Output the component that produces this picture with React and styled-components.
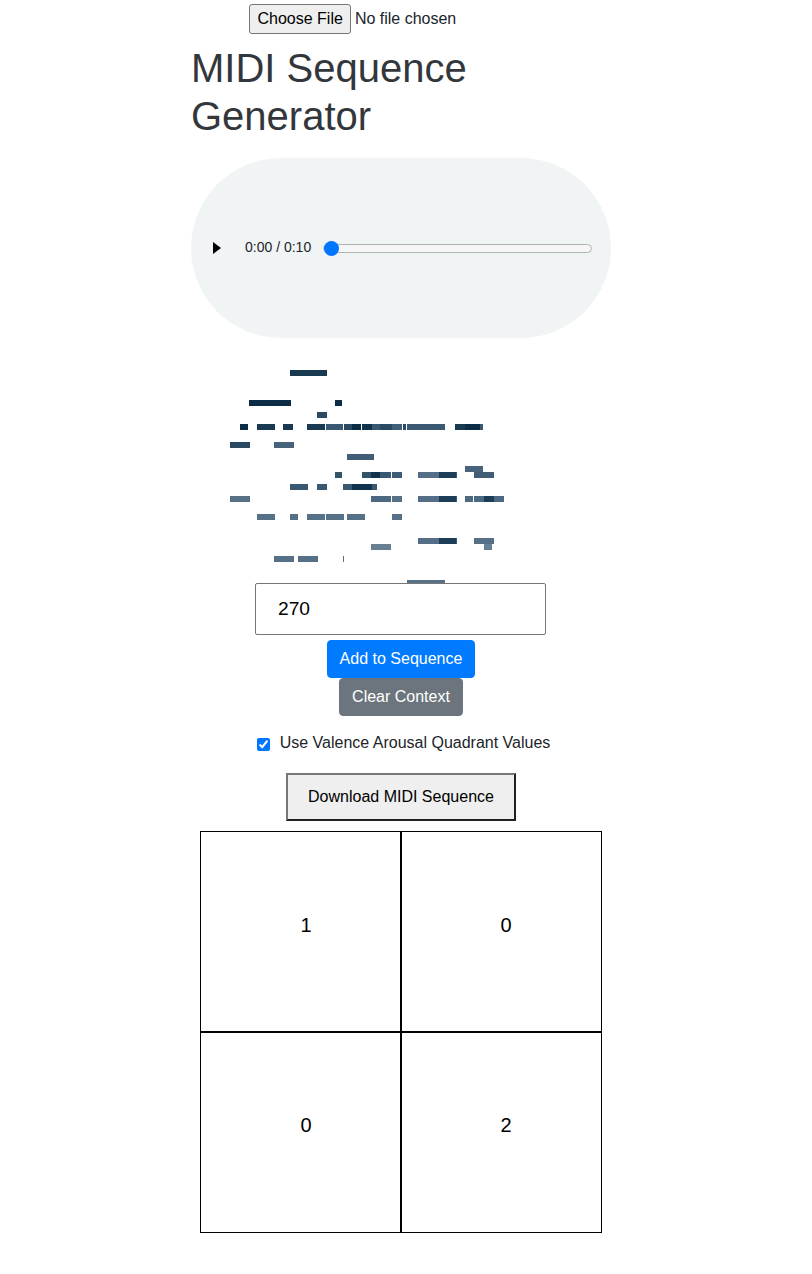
import React from 'react'
import styled, { createGlobalStyle } from 'styled-components'

const A = '#0c2c46'
const B = '#193951'
const C = '#2a4a63'
const D = '#395871'
const E = '#48647c'
const F = '#557087'
const G = '#688093'
const H = '#11344e'

// x1, x2, y, colour; every note is 6px high
const notes = [
    [290, 327, 370, B],
    [249, 291, 400, A], [335, 342, 400, A],
    [317, 327, 412, C],
    [240, 248, 424, A], [257, 275, 424, B], [283, 293, 424, B], [307, 325, 424, B],
    [326, 343, 424, D], [344, 352, 424, C], [352, 361, 424, A], [362, 372, 424, H],
    [372, 380, 424, D], [380, 392, 424, C], [392, 402, 424, '#415f78'], [403, 406, 424, C],
    [407, 445, 424, '#3b5972'], [455, 465, 424, B], [465, 480, 424, A], [480, 483, 424, '#3b5972'],
    [230, 250, 442, C], [274, 294, 442, E],
    [347, 374, 454, '#425d76'],
    [465, 483, 466, E],
    [335, 342, 472, '#335369'], [362, 371, 472, '#335369'], [371, 380, 472, H], [380, 391, 472, D],
    [392, 402, 472, '#3d5b74'], [418, 439, 472, '#536e86'], [439, 456, 472, '#1c3d58'],
    [456, 457, 472, D], [474, 494, 472, '#425d76'],
    [290, 308, 484, D], [317, 327, 484, D], [343, 352, 484, D], [352, 372, 484, H], [372, 377, 484, D],
    [230, 250, 496, F], [371, 391, 496, '#4d6981'], [392, 402, 496, F], [418, 439, 496, '#536e86'],
    [439, 456, 496, '#1c3d58'], [456, 457, 496, D], [465, 473, 496, '#4d6981'], [474, 484, 496, '#4d6981'],
    [484, 494, 496, '#1c3d58'], [494, 504, 496, '#4d6981'],
    [257, 275, 514, F], [290, 298, 514, F], [307, 325, 514, F], [326, 344, 514, F],
    [347, 365, 514, F], [392, 402, 514, F],
    [418, 439, 538, '#536e86'], [439, 456, 538, '#1c3d58'], [456, 457, 538, D], [474, 494, 538, F],
    [371, 391, 544, G], [484, 492, 544, G],
    [274, 294, 556, F], [298, 318, 556, F], [343, 344, 556, F],
    [407, 445, 580, F],
]

const quadrants = [1, 0, 0, 2]

export default function App() {
    return (
        <Page>
            <GlobalStyle />
            <FileInput type="file" />
            <Column>
                <Title>MIDI Sequence Generator</Title>
                <Player>
                    <PlayIcon viewBox="0 0 8 12"><path d="M0 0 L8 6 L0 12 Z" /></PlayIcon>
                    <Time>0:00 / 0:10</Time>
                    <Seek type="range" min="0" max="10" defaultValue="0" />
                </Player>
                <PianoRoll viewBox="191 338 420 245">
                    {notes.map(([x1, x2, y, fill]) => (
                        <rect key={`${x1}-${y}`} x={x1} y={y} width={x2 - x1} height="6" fill={fill} />
                    ))}
                </PianoRoll>
            </Column>
            <LengthInput type="number" defaultValue="270" />
            <ButtonStack>
                <ActionButton $bg="#007bff">Add to Sequence</ActionButton>
                <ActionButton $bg="#6c757d">Clear Context</ActionButton>
            </ButtonStack>
            <CheckRow>
                <input type="checkbox" defaultChecked />
                <span>Use Valence Arousal Quadrant Values</span>
            </CheckRow>
            <DownloadButton>Download MIDI Sequence</DownloadButton>
            <QuadrantGrid>
                {quadrants.map((count, i) => (
                    <Quadrant key={i}>{count}</Quadrant>
                ))}
            </QuadrantGrid>
        </Page>
    )
}

const GlobalStyle = createGlobalStyle`
    html {
        background: #fff;
    }
    body {
        margin: 0;
        background: #fff;
        color: #212529;
        font-family: "Liberation Sans", Arial, sans-serif;
        font-size: 16px;
        line-height: 1.5;
    }
`;

const Page = styled.div`
    width: 802px;
    height: 1274px;
    padding-top: 4px;
    box-sizing: border-box;
    text-align: center;
`;

const FileInput = styled.input`
    display: inline-block;
    margin-right: 2px;
    font: inherit;
    height: 30px;
    vertical-align: top;

    &::file-selector-button {
        height: 30px;
        padding: 0 7px 0 8px;
        border: 1px solid #767676;
        border-radius: 3px;
        background: #efefef;
        color: #000;
        font: inherit;
    }
`;

const Column = styled.div`
    width: 420px;
    margin: 10px auto 0;
`;

const Title = styled.h1`
    margin: 0 0 18px;
    color: #33373c;
    font-size: 40px;
    font-weight: 500;
    line-height: 48px;
    text-align: left;
`;

const Player = styled.div`
    display: flex;
    align-items: center;
    height: 180px;
    padding: 0 19px 0 22px;
    box-sizing: border-box;
    border-radius: 90px;
    background: #f1f4f5;
`;

const PlayIcon = styled.svg`
    width: 8px;
    height: 12px;
    flex: none;
    margin-right: 24px;
    fill: #000;
`;

const Time = styled.span`
    font-size: 14px;
    line-height: 20px;
    margin: 0 12px 2px 0;
`;

const Seek = styled.input`
    appearance: none;
    flex: 1;
    min-width: 0;
    height: 9px;
    margin: 0;
    border: 1px solid #b2b2b2;
    border-radius: 5px;
    background: #f6f6f6;
    box-sizing: border-box;

    &::-webkit-slider-thumb {
        appearance: none;
        width: 15px;
        height: 15px;
        border-radius: 50%;
        background: #0075ff;
    }
`;

const PianoRoll = styled.svg`
    display: block;
    width: 420px;
    height: 245px;
    shape-rendering: crispEdges;
`;

const LengthInput = styled.input`
    display: block;
    width: 291px;
    height: 52px;
    margin: 0 0 0 255px;
    padding: 0 22px;
    box-sizing: border-box;
    border: 1px solid #767676;
    border-radius: 2px;
    background: #fff;
    color: #000;
    font-family: inherit;
    font-size: 19.2px;
`;

const ButtonStack = styled.div`
    display: flex;
    flex-direction: column;
    align-items: center;
    margin-top: 5px;
`;

const ActionButton = styled.button`
    height: 38px;
    padding: 0 12px;
    border: 1px solid ${props => props.$bg};
    border-radius: 4px;
    background: ${props => props.$bg};
    color: #fff;
    font-family: inherit;
    font-size: 16px;
`;

const CheckRow = styled.label`
    display: flex;
    justify-content: center;
    align-items: center;
    gap: 10px;
    height: 24px;
    margin-top: 15px;
    padding-left: 5px;

    input {
        width: 13px;
        height: 13px;
        margin: 3px 0 0;
    }
`;

const DownloadButton = styled.button`
    display: block;
    width: 230px;
    height: 48px;
    margin: 18px auto 0;
    padding: 0;
    border: 2px solid;
    border-color: #767676 #212121 #212121 #767676;
    background: #efefef;
    color: #000;
    font-family: inherit;
    font-size: 16px;
`;

const QuadrantGrid = styled.div`
    display: grid;
    grid-template-columns: 201px 201px;
    grid-template-rows: 201px 201px;
    width: 402px;
    margin: 10px auto 0;
    box-sizing: border-box;
`;

const Quadrant = styled.div`
    display: flex;
    align-items: center;
    justify-content: center;
    padding: 0 0 14px 11px;
    box-sizing: border-box;
    border: 1px solid #000;
    color: #000;
    font-size: 20px;

    &:nth-child(even) {
        padding-left: 9px;
    }
    &:nth-child(n + 3) {
        padding-bottom: 16px;
    }
`;
